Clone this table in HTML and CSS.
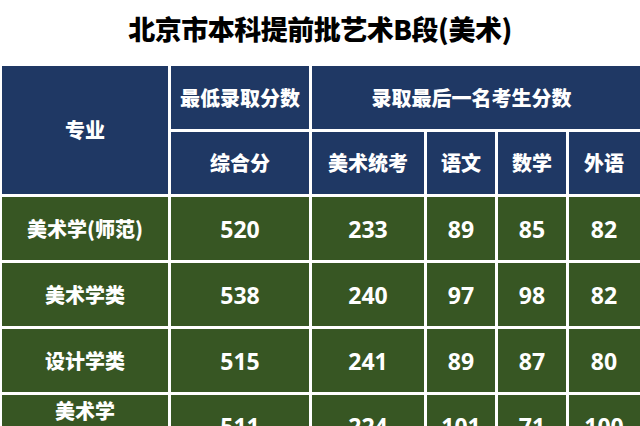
FILE: index.html
```html
<!DOCTYPE html>
<html lang="zh">
<head>
<meta charset="utf-8">
<link rel="stylesheet" href="styles.css">
</head>
<body>
<h1 class="title">北京市本科提前批艺术B段(美术)</h1>
<table class="scores">
  <colgroup>
    <col class="c-major">
    <col class="c-total">
    <col class="c-art">
    <col class="c-sub">
    <col class="c-sub">
    <col class="c-last">
  </colgroup>
  <thead>
    <tr class="h1">
      <th rowspan="2">专业</th>
      <th>最低录取分数</th>
      <th colspan="4">录取最后一名考生分数</th>
    </tr>
    <tr class="h2">
      <th>综合分</th>
      <th>美术统考</th>
      <th>语文</th>
      <th>数学</th>
      <th>外语</th>
    </tr>
  </thead>
  <tbody>
    <tr><td class="name">美术学(师范)</td><td>520</td><td>233</td><td>89</td><td>85</td><td>82</td></tr>
    <tr><td class="name">美术学类</td><td>538</td><td>240</td><td>97</td><td>98</td><td>82</td></tr>
    <tr><td class="name">设计学类</td><td>515</td><td>241</td><td>89</td><td>87</td><td>80</td></tr>
    <tr class="tall"><td class="name">美术学<br>(中外合作)</td><td>511</td><td>224</td><td>101</td><td>71</td><td>100</td></tr>
  </tbody>
</table>
</body>
</html>
```
FILE: styles.css
```css
html, body {
  margin: 0;
  padding: 0;
  background: #ffffff;
  overflow: hidden;
}
body {
  width: 640px;
  height: 426px;
  font-family: "Noto Sans CJK SC", "Noto Sans", sans-serif;
}
.title {
  margin: 0;
  height: 63px;
  display: flex;
  align-items: center;
  justify-content: center;
  padding-bottom: 6px;
  box-sizing: border-box;
  font-size: 27px;
  font-weight: 900;
  color: #000;
  letter-spacing: -0.5px;
}
.scores {
  border-collapse: separate;
  border-spacing: 3px;
  table-layout: fixed;
  margin-left: -1px;
  margin-top: 0;
  width: 650px;
  color: #ffffff;
}
.c-major { width: 166px; }
.c-total { width: 138px; }
.c-art { width: 112px; }
.c-sub { width: 68px; }
.c-last { width: 80px; }
th, td {
  padding: 0;
  text-align: center;
  vertical-align: middle;
  font-weight: 900;
  white-space: nowrap;
}
th {
  background: #1f3864;
  font-size: 20px;
  line-height: 24px;
}
.h1 th { height: 63px; }
.h2 th { height: 62px; }
.h1 th:nth-child(3) { padding-right: 18px; }
.h2 th:last-child { padding-right: 10px; }
td {
  background: #375623;
  height: 63px;
  font-family: "Open Sans", "Noto Sans CJK SC", sans-serif;
  font-size: 23px;
  font-weight: 700;
  line-height: 26px;
}
td:last-child { padding-right: 10px; }
td.name {
  font-family: "Noto Sans CJK SC", sans-serif;
  font-weight: 900;
  font-size: 20px;
}
.tall td { height: 62px; }
.tall td.name { line-height: 30px; }
```
